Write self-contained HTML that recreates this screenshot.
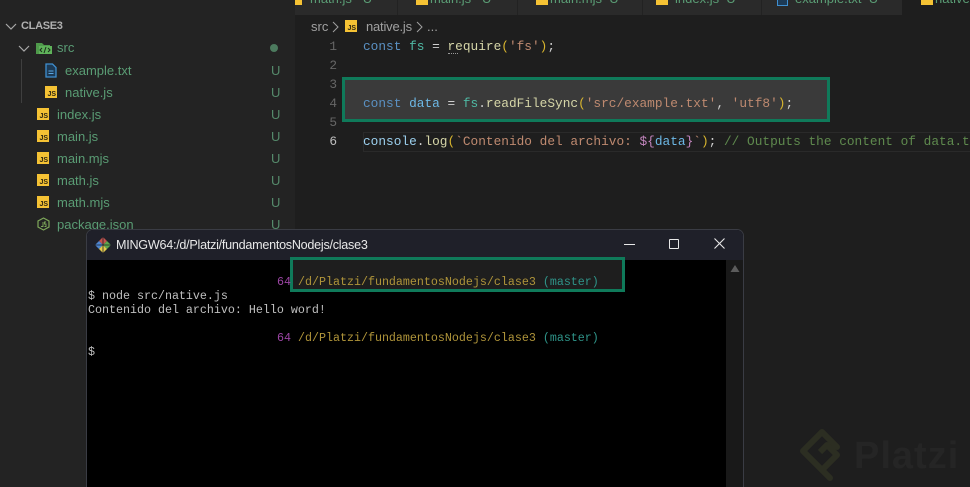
<!DOCTYPE html>
<html>
<head>
<meta charset="utf-8">
<style>
html,body{margin:0;padding:0;background:#1e1e1e;}
#p{position:relative;width:970px;height:487px;overflow:hidden;background:#1e1e1e;font-family:"Liberation Sans",sans-serif;}
#p div,#p span.a{position:absolute;white-space:pre;}
.side{color:#5a9c74;font-size:13px;line-height:22px;height:22px;}
.u{color:#558a6b;font-size:13px;line-height:22px;height:22px;left:271px;}
.js{width:12px;height:12px;background:#f5c234;}
.js b{position:absolute;right:1px;bottom:0;font:bold 7px/7px "Liberation Sans",sans-serif;color:#2b2410;}
.tab{top:0;height:15px;background:#2a2a2a;border-right:1px solid #222;}
.tt{top:-10px;color:#5a9c74;font-size:13px;line-height:18px;}
.code{font-family:"Liberation Mono",monospace;font-size:12.8px;line-height:19px;height:19px;color:#cfcfcf;}
.ln{font-family:"Liberation Mono",monospace;font-size:12.8px;line-height:19px;height:19px;color:#666;left:327px;width:10px;text-align:right;}
.k{color:#5a90c2}.v{color:#6db8e6}.f{color:#d6d6a8}.s{color:#bf8a70}.y{color:#d8b52e}.m{color:#4fb9a4}.c{color:#5f8a4e}.pk{color:#c586c0}.w{color:#cfcfcf}
.term{font-family:"Liberation Mono",monospace;font-size:11.67px;line-height:14px;height:14px;color:#c0c0c0;}
.pa{color:#b0953a}.ma{color:#2f9489}.pu{color:#9c45a4}
</style>
</head>
<body>
<div id="p">
  <!-- sidebar -->
  <div style="left:0;top:0;width:295px;height:487px;background:#232323"></div>
  <div style="left:21px;top:-10px;color:#8a8a8a;font-size:11px;line-height:14px">EXPLORADOR</div>
  <svg style="position:absolute;left:5px;top:22px" width="12" height="10"><path d="M1 2l5 5 5-5" fill="none" stroke="#a8a8a8" stroke-width="1.2"/></svg>
  <div style="left:21px;top:19px;color:#b0b0b0;font-size:11px;font-weight:bold;letter-spacing:-.3px;line-height:15px">CLASE3</div>
  <svg style="position:absolute;left:18px;top:44px" width="12" height="10"><path d="M1 2l5 5 5-5" fill="none" stroke="#a8a8a8" stroke-width="1.2"/></svg>
  <svg style="position:absolute;left:36px;top:42px" width="16" height="13"><path d="M0 1h6l2 2h6v9H0z" fill="#4f9a4b"/><path d="M3 4h13v8H3z" fill="#5fb35a"/><path d="M6 6l-2 2 2 2M12 6l2 2-2 2M10 5l-2 6" fill="none" stroke="#1d2b1c" stroke-width="1"/></svg>
  <div class="side" style="left:57px;top:37px">src</div>
  <div style="left:270px;top:44px;width:8px;height:8px;border-radius:50%;background:#4c7a5e"></div>
  <div style="left:21px;top:59px;width:1px;height:44px;background:#3f3f3f"></div>

  <svg style="position:absolute;left:45px;top:63px" width="12" height="15"><path d="M1 1h6.500L11 4.500V14H1z" fill="#1d3a55" stroke="#3f8fd0" stroke-width="1.300"/><path d="M3.500 8h5M3.500 10.500h5" stroke="#5aa5e0" stroke-width="1"/></svg>
  <div class="side" style="left:65px;top:60px">example.txt</div>
  <div class="u" style="top:60px">U</div>

  <div class="js" style="left:45px;top:86px"><b>JS</b></div>
  <div class="side" style="left:65px;top:82px">native.js</div>
  <div class="u" style="top:82px">U</div>

  <div class="js" style="left:37px;top:108px"><b>JS</b></div>
  <div class="side" style="left:57px;top:104px">index.js</div>
  <div class="u" style="top:104px">U</div>

  <div class="js" style="left:37px;top:130px"><b>JS</b></div>
  <div class="side" style="left:57px;top:126px">main.js</div>
  <div class="u" style="top:126px">U</div>

  <div class="js" style="left:37px;top:152px"><b>JS</b></div>
  <div class="side" style="left:57px;top:148px">main.mjs</div>
  <div class="u" style="top:148px">U</div>

  <div class="js" style="left:37px;top:174px"><b>JS</b></div>
  <div class="side" style="left:57px;top:170px">math.js</div>
  <div class="u" style="top:170px">U</div>

  <div class="js" style="left:37px;top:196px"><b>JS</b></div>
  <div class="side" style="left:57px;top:192px">math.mjs</div>
  <div class="u" style="top:192px">U</div>

  <svg style="position:absolute;left:37px;top:217px" width="13" height="14"><path d="M6.500 1l5.500 3v6l-5.500 3L1 10V4z" fill="none" stroke="#7ea85a" stroke-width="1.200"/><path d="M6 5v4.500H4M9 5H7.500v2H9v2.500H7.500" fill="none" stroke="#7ea85a" stroke-width=".9"/></svg>
  <div class="side" style="left:57px;top:214px">package.json</div>
  <div class="u" style="top:214px">U</div>

  <!-- tabs -->
  <div style="left:295px;top:0;width:675px;height:15px;background:#252525"></div>
  <div class="tab" style="left:295px;width:102px"></div>
  <div class="tab" style="left:398px;width:119px"></div>
  <div class="tab" style="left:518px;width:124px"></div>
  <div class="tab" style="left:643px;width:118px"></div>
  <div class="tab" style="left:762px;width:140px"></div>
  <div style="left:902px;top:0;width:68px;height:15px;background:#1e1e1e"></div>
  <div class="js" style="left:295px;top:-7px;width:7px"></div>
  <div class="tt" style="left:310px">math.js   U</div>
  <div class="js" style="left:416px;top:-7px"></div>
  <div class="tt" style="left:430px">main.js   U</div>
  <div class="js" style="left:536px;top:-7px"></div>
  <div class="tt" style="left:550px">main.mjs  U</div>
  <div class="js" style="left:656px;top:-7px"></div>
  <div class="tt" style="left:675px">index.js  U</div>
  <div style="left:777px;top:-6px;width:9px;height:10px;background:#1d3a55;border:1px solid #3f8fd0"></div>
  <div class="tt" style="left:795px">example.txt  U</div>
  <div class="js" style="left:921px;top:-7px"></div>
  <div class="tt" style="left:935px">native.js</div>

  <!-- breadcrumb -->
  <div style="left:311px;top:19px;color:#a0a0a0;font-size:13px;line-height:16px">src</div>
  <svg style="position:absolute;left:332px;top:21px" width="8" height="12"><path d="M1 1l5 5-5 5" fill="none" stroke="#a0a0a0" stroke-width="1"/></svg>
  <div class="js" style="left:345px;top:20px"><b>JS</b></div>
  <div style="left:366px;top:19px;color:#a0a0a0;font-size:13px;letter-spacing:-.2px;line-height:16px">native.js</div>
  <svg style="position:absolute;left:416px;top:21px" width="8" height="12"><path d="M1 1l5 5-5 5" fill="none" stroke="#a0a0a0" stroke-width="1"/></svg>
  <div style="left:427px;top:19px;color:#a0a0a0;font-size:13px;line-height:16px">...</div>

  <!-- editor highlight -->
  <div style="left:342px;top:77px;width:482px;height:39px;background:#3a3a3a;border:3px solid #0f7a5a"></div>
  <div style="left:363px;top:132px;width:607px;height:18px;border:1px solid #2a2a2a;border-right:0"></div>

  <div class="ln" style="top:37px">1</div>
  <div class="ln" style="top:56px">2</div>
  <div class="ln" style="top:75px">3</div>
  <div class="ln" style="top:94px">4</div>
  <div class="ln" style="top:113px">5</div>
  <div class="ln" style="top:132px;color:#c0c0c0">6</div>

  <div class="code" style="left:363px;top:37px"><span class="k">const</span> <span class="m">fs</span> = <span class="f">require</span><span class="y">(</span><span class="s">'fs'</span><span class="y">)</span>;</div>
  <div style="left:448px;top:53px;width:10px;height:0;border-top:1px dotted #9a9a9a"></div>
  <div class="code" style="left:363px;top:94px"><span class="k">const</span> <span class="v">data</span> = <span class="m">fs</span>.<span class="f">readFileSync</span><span class="y">(</span><span class="s">'src/example.txt'</span>, <span class="s">'utf8'</span><span class="y">)</span>;</div>
  <div class="code" style="left:363px;top:132px"><span style="color:#9cd0ee">console</span>.<span class="f">log</span><span class="y">(</span><span class="s">`Contenido del archivo: </span><span class="pk">${</span><span class="v">data</span><span class="pk">}</span><span class="s">`</span><span class="y">)</span>; <span class="c">// Outputs the content of data.txt</span></div>

  <!-- terminal window -->
  <div style="left:86px;top:229px;width:656px;height:260px;background:#000;border:1px solid #3a3c44;border-radius:7px 7px 0 0;overflow:hidden">
    <div style="left:0;top:0;width:656px;height:30px;background:#1f2029"></div>
    <div style="left:639px;top:30px;width:17px;height:230px;background:#191919"></div>
    <div style="left:0;top:30px;width:639px;height:230px;background:#000"></div>
  </div>
  <svg style="position:absolute;left:95px;top:237px" width="16" height="16"><path d="M8 0l4 4-4 4-4-4z" fill="#c4524e"/><path d="M12 4l4 4-4 4-4-4z" fill="#5da84c"/><path d="M4 4l4 4-4 4-4-4z" fill="#4e86d0"/><path d="M8 8l4 4-4 4-4-4z" fill="#e3c94c"/><path d="M8 0v16M0 8h16" stroke="#1f2029" stroke-width=".8"/></svg>
  <div style="left:116px;top:237px;color:#e8e8e8;font-size:12.6px;letter-spacing:-.26px;line-height:16px">MINGW64:/d/Platzi/fundamentosNodejs/clase3</div>
  <div style="left:624px;top:244px;width:11px;height:1px;background:#e8e8e8"></div>
  <div style="left:669px;top:239px;width:8px;height:8px;border:1.200px solid #e8e8e8;border-radius:1px"></div>
  <svg style="position:absolute;left:714px;top:238px" width="11" height="11"><path d="M.5.5l10 10M10.500.5l-10 10" stroke="#e8e8e8" stroke-width="1.100"/></svg>
  <svg style="position:absolute;left:730px;top:265px" width="10" height="8"><path d="M5 0l4.500 7H.5z" fill="#5c5c5c"/></svg>

  <!-- terminal highlight box -->
  <div style="left:290px;top:257px;width:329px;height:29px;background:#1e1e1e;border:3px solid #0f7a5a"></div>

  <div class="term" style="left:277px;top:275px"><span class="pu">64</span></div>
  <div class="term" style="left:298px;top:275px"><span class="pa">/d/Platzi/fundamentosNodejs/clase3</span> <span class="ma">(master)</span></div>
  <div class="term" style="left:88px;top:289px">$ node src/native.js</div>
  <div class="term" style="left:88px;top:303px">Contenido del archivo: Hello word!</div>
  <div class="term" style="left:277px;top:331px"><span class="pu">64</span></div>
  <div class="term" style="left:298px;top:331px"><span class="pa">/d/Platzi/fundamentosNodejs/clase3</span> <span class="ma">(master)</span></div>
  <div class="term" style="left:88px;top:345px">$</div>

  <!-- watermark -->
  <svg style="position:absolute;left:797px;top:427px" width="50" height="56"><path d="M25 5L6 24l19 19 15-15-10-10-7 7" fill="none" stroke="#2c2e22" stroke-width="6" stroke-linejoin="round"/><path d="M25 5l15 15M25 43l8 8" fill="none" stroke="#2c2e22" stroke-width="6" stroke-linecap="round"/></svg>
  <div style="left:854px;top:434px;color:#252525;font-size:38px;letter-spacing:1px;line-height:44px;font-weight:bold">Platzi</div>
</div>
</body>
</html>
